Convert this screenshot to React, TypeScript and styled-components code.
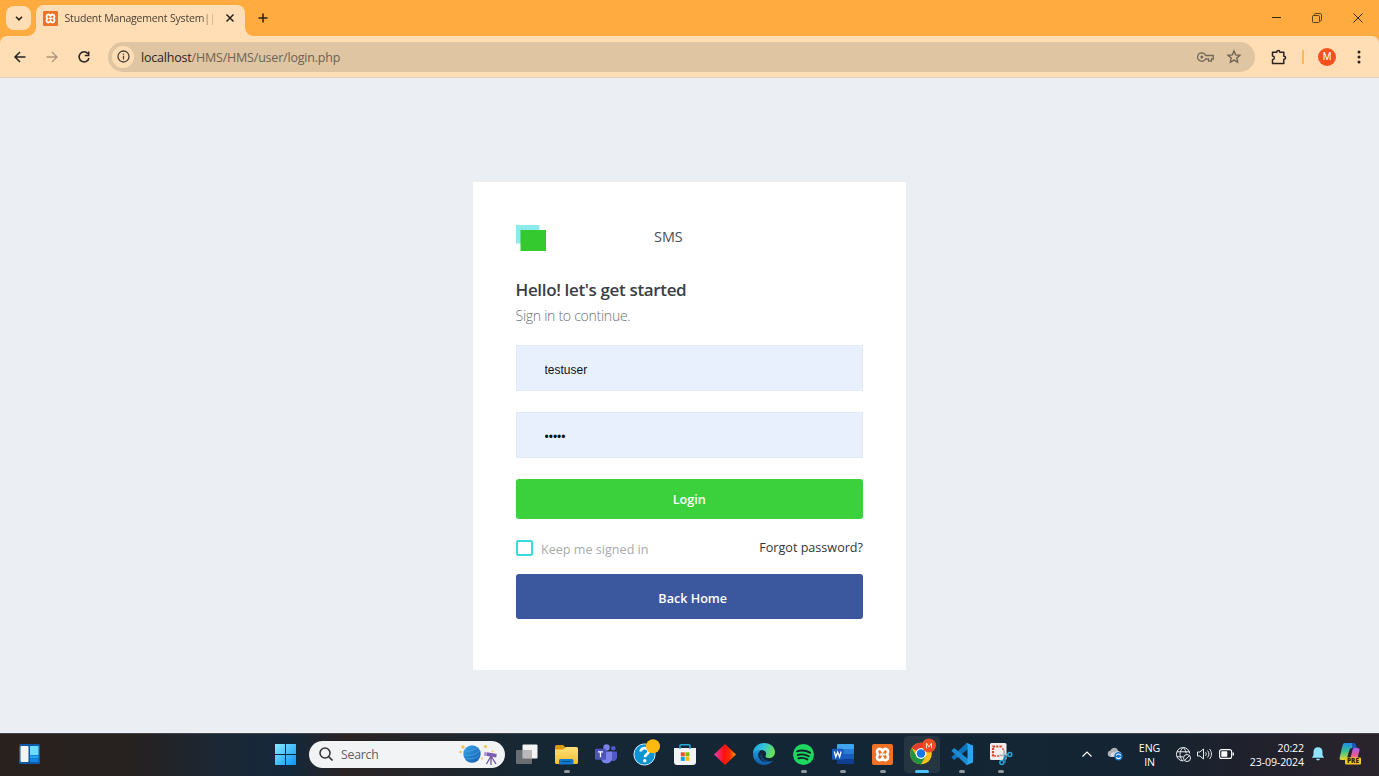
import React from "react";
import styled, { createGlobalStyle } from "styled-components";

const GlobalStyle = createGlobalStyle`
  * { box-sizing: border-box; }
  html, body { margin: 0; padding: 0; }
  body { width: 1379px; height: 776px; overflow: hidden; font-family: "Open Sans", "Noto Sans", sans-serif; }
  svg { display: block; flex: none; overflow: visible; }
`;

const Screen = styled.div`
  width: 1379px;
  height: 776px;
  display: flex;
  flex-direction: column;
  background: #ebeff4;
`;

/* ---------- browser ---------- */

const TabStrip = styled.header`
  height: 36px;
  display: flex;
  align-items: flex-start;
  background: #ffab40;
`;

const TabSearch = styled.button`
  width: 25px;
  height: 24px;
  margin: 6px 5px 0 6px;
  padding: 0;
  border: 0;
  border-radius: 8px;
  background: #ffdeb5;
  display: grid;
  place-items: center;
`;

const Tab = styled.div`
  position: relative;
  width: 209px;
  height: 31px;
  margin-top: 5px;
  padding: 0 9px 5px 7px;
  display: flex;
  align-items: center;
  border-radius: 8px 8px 0 0;
  background: #ffdeb5;
`;

const TabCurve = styled.svg<{ $side: "left" | "right" }>`
  position: absolute;
  bottom: 0;
  ${(p) => (p.$side === "left" ? "left: -9px;" : "right: -9px; transform: scaleX(-1);")}
`;

const TabTitle = styled.span`
  width: 154px;
  margin-left: 6.5px;
  white-space: nowrap;
  font: 400 10.5px/16px "Open Sans", sans-serif;
  letter-spacing: -0.18px;
  color: #4a4033;
  mask-image: linear-gradient(90deg, #000 88%, rgba(0, 0, 0, 0.1) 98%);
`;

const Spacer = styled.div`
  flex: 1;
`;

const WindowButtons = styled.div`
  display: flex;
  height: 36px;
  align-items: center;
  gap: 31px;
  padding-right: 16px;
`;

const Toolbar = styled.div`
  height: 42px;
  display: flex;
  align-items: center;
  padding: 0 12px;
  background: #ffdeb5;
  border-bottom: 1px solid #e3d2bd;
  border-radius: 7px 7px 0 0;
`;

const ToolbarBacking = styled.div`
  background: #ffab40;
`;

const NavIcon = styled.span<{ $w?: number }>`
  width: ${(p) => p.$w ?? 32}px;
  display: grid;
  place-items: center;
  flex: none;
`;

const AddressBar = styled.div`
  width: 1147px;
  height: 30px;
  display: flex;
  align-items: center;
  padding: 0 8px 0 4px;
  border-radius: 15px;
  background: #dfc5a2;
`;

const SiteInfo = styled.span`
  width: 22px;
  height: 22px;
  margin-right: 7px;
  border-radius: 50%;
  background: #ffdeb5;
  display: grid;
  place-items: center;
`;

const Url = styled.span`
  padding-top: 2px;
  font: 400 12.5px/18px "Open Sans", sans-serif;
  letter-spacing: -0.2px;
  color: #6d6252;
  b { font-weight: 400; color: #2b251d; }
`;

const ToolDivider = styled.span`
  width: 2px;
  height: 14px;
  margin: 0 14px 0 0;
  background: #ffb95c;
`;

const Avatar = styled.span`
  width: 18px;
  height: 18px;
  border-radius: 50%;
  background: #f4511e;
  color: #fff;
  font: 400 10px/18px Roboto, sans-serif;
  text-align: center;
`;

/* ---------- login page ---------- */

const Page = styled.main`
  height: 655px;
  padding: 104px 0.5px 0 0;
  background: #ebeff4;
`;

const Card = styled.form`
  width: 433.5px;
  height: 488px;
  margin: 0 auto;
  padding: 43px 43px 0 43px;
  background: #fff;
  display: flex;
  flex-direction: column;
`;

const Brand = styled.div`
  height: 27px;
  display: flex;
  align-items: flex-start;
`;

const BrandName = styled.span`
  margin-left: 108.5px;
  font-size: 14.4px;
  line-height: 24px;
  color: #4d4f52;
`;

const Heading = styled.h4`
  margin: 26px 0 0;
  font-size: 17px;
  font-weight: 600;
  line-height: 24px;
  letter-spacing: -0.35px;
  color: #3a4046;
`;

const Lead = styled.h6`
  margin: 4px 0 0;
  font-size: 14.1px;
  font-weight: 300;
  line-height: 20px;
  letter-spacing: -0.3px;
  color: #6f7275;
`;

const Field = styled.input<{ $gap: number }>`
  width: 100%;
  height: 46px;
  margin-top: ${(p) => p.$gap}px;
  padding: 3px 28px 0;
  border: 1px solid #e3eaf7;
  border-radius: 0;
  outline: 0;
  background: #e8f0fe;
  color: #111;
  font: 400 12px "Liberation Sans", Arial, sans-serif;
`;

const Action = styled.button<{ $color: string; $h: number; $gap: number; $indent?: number; $drop?: number }>`
  width: 100%;
  height: ${(p) => p.$h}px;
  flex: none;
  margin-top: ${(p) => p.$gap}px;
  padding: ${(p) => p.$drop ?? 0}px 0 0 ${(p) => p.$indent ?? 0}px;
  border: 0;
  border-radius: 3px;
  background: ${(p) => p.$color};
  color: #fff;
  font: 600 12.6px/18px "Open Sans", sans-serif;
`;

const Options = styled.div`
  height: 20px;
  margin-top: 19px;
  display: flex;
  align-items: center;
  font-size: 12.6px;
  line-height: 18px;
`;

const CheckBox = styled.span`
  width: 17px;
  height: 16px;
  margin-right: 8.5px;
  border: 2px solid #37dbe2;
  border-radius: 2px;
`;

const CheckLabel = styled.label`
  flex: 1;
  padding-top: 3px;
  color: #a7abae;
`;

const Forgot = styled.a`
  padding-bottom: 1px;
  color: #33363a;
`;

/* ---------- taskbar ---------- */

const Taskbar = styled.footer`
  height: 43px;
  display: flex;
  align-items: center;
  padding-bottom: 2px;
  border-top: 1px solid #45464c;
  background: linear-gradient(90deg, #28211e 0%, #27211f 9%, #1b2734 16%, #14283b 21%, #2a2324 25%, #222529 31%, #162734 38%, #132635 60%, #142432 82%, #1f212c 90%, #2a242c 100%);
`;

const Widgets = styled.span`
  margin: 0 235px 0 19px;
`;

const SearchBox = styled.div`
  width: 196px;
  height: 27px;
  margin: 0 2.5px 0 13px;
  padding: 0 6px 0 10px;
  display: flex;
  align-items: center;
  border-radius: 14px;
  background: #f2f3f5;
  color: #5c5f63;
  font: 400 12.3px/18px "Open Sans", sans-serif;
  letter-spacing: -0.25px;
`;

const SearchText = styled.span`
  flex: 1;
  margin-left: 8px;
  padding-top: 2px;
`;

const AppSlot = styled.span<{ $active?: boolean }>`
  position: relative;
  width: 36px;
  height: 37px;
  margin: 0 1.75px;
  flex: none;
  display: grid;
  place-items: center;
  border-radius: 4px;
  background: ${(p) => (p.$active ? "#253642" : "transparent")};
`;

const Running = styled.i<{ $active?: boolean }>`
  position: absolute;
  bottom: 0;
  left: 50%;
  width: ${(p) => (p.$active ? 14 : 6)}px;
  height: 3px;
  transform: translateX(-50%);
  border-radius: 2px;
  background: ${(p) => (p.$active ? "#4cc2ff" : "#8f989f")};
`;

const TrayItem = styled.span<{ $ml: number }>`
  margin-left: ${(p) => p.$ml}px;
  flex: none;
`;

const TrayText = styled.span<{ $w: number; $ml: number; $align: string }>`
  width: ${(p) => p.$w}px;
  margin-left: ${(p) => p.$ml}px;
  padding-top: 1px;
  flex: none;
  color: #fff;
  text-align: ${(p) => p.$align};
  white-space: nowrap;
  font: 400 10.6px/14px "Open Sans", sans-serif;
  letter-spacing: -0.1px;
`;

const RaisedIcon = styled.span`
  padding-bottom: 5px;
`;

/* ---------- icons ---------- */

const Xampp = ({ size }: { size: number }) => (
  <svg width={size} height={size} viewBox="0 0 22 22">
    <rect width="22" height="22" rx="2" fill="#ee7125" />
    <path d="M7.200 5.200c2.200-.7 3.200 1 3.800 2.200.6-1.200 1.600-2.900 3.800-2.200 2.700.9 2.400 4.100.8 5.800 1.600 1.700 1.900 4.900-.8 5.800-2.200.7-3.200-1-3.800-2.200-.6 1.200-1.600 2.900-3.800 2.200C4.500 15.900 4.800 12.700 6.400 11 4.800 9.300 4.500 6.100 7.200 5.200z" fill="none" stroke="#fff" strokeWidth="2.700" />
    <path d="M8.500 11h5" stroke="#fff" strokeWidth="2.300" />
  </svg>
);

const WidgetsIcon = () => (
  <svg width="21" height="20" viewBox="0 0 21 20">
    <rect width="21" height="20" rx="1.500" fill="#0c5cab" />
    <rect x="1.500" y="2" width="8" height="16" rx="1" fill="#f4f4f4" />
    <rect x="11" y="2" width="8.500" height="9" fill="#6edcff" />
    <rect x="11" y="11.500" width="8.500" height="3" fill="#22a5f0" />
    <rect x="11" y="15" width="8.500" height="3" fill="#0f86e4" />
  </svg>
);

const WindowsIcon = () => (
  <svg width="21" height="21" viewBox="0 0 21 21">
    <defs>
      <linearGradient id="win" x1="0" y1="0" x2="1" y2="1">
        <stop offset="0" stopColor="#83ecfd" />
        <stop offset="1" stopColor="#0a93f8" />
      </linearGradient>
    </defs>
    <path d="M0 0h10v10H0zM11 0h10v10H11zM0 11h10v10H0zM11 11h10v10H11z" fill="url(#win)" />
  </svg>
);

const SearchArt = () => (
  <svg width="42" height="22" viewBox="0 0 42 22">
    <defs>
      <linearGradient id="planet" x1="0" y1="0" x2="1" y2="1">
        <stop offset="0" stopColor="#3aa9ee" />
        <stop offset="1" stopColor="#1257ae" />
      </linearGradient>
    </defs>
    <circle cx="15" cy="11" r="8.700" fill="url(#planet)" />
    <path d="M9 8c4 1 7-1 11-3M8 12c5 1.500 10 0 14.500-4M10 15.500c4 1 9 0 12.500-3.500" fill="none" stroke="#3f9fe0" strokeWidth="1" />
    <g fill="#f3c04b">
      <circle cx="6" cy="4" r="1.700" /><circle cx="3.500" cy="9" r="1.200" /><circle cx="28.500" cy="3.500" r="1.500" /><circle cx="25" cy="15.500" r="1" /><circle cx="35.500" cy="8.500" r="1" />
    </g>
    <path d="M29.500 11l10 1.700" stroke="#7b5cb5" strokeWidth="3.500" />
    <path d="M28.500 8.800l-.6 4" stroke="#a58ad6" strokeWidth="1.800" />
    <path d="M34 13l-4.500 8M34 13v9M34 13l5 8" stroke="#6f5a9c" strokeWidth="1.300" />
  </svg>
);

const TaskViewIcon = () => (
  <svg width="22" height="20" viewBox="0 0 22 20">
    <rect x="6.500" y="0.500" width="15" height="14" rx="1" fill="#f3f3f3" />
    <rect x="0" y="6" width="16" height="14" rx="1" fill="#77797a" opacity=".88" />
    <rect x="6.500" y="6" width="9.500" height="8.500" fill="#b9b9b9" />
  </svg>
);

const FolderIcon = () => (
  <svg width="23" height="21" viewBox="0 0 23 21">
    <defs>
      <linearGradient id="folder" x1="0" y1="0" x2="0" y2="1">
        <stop offset="0" stopColor="#ffe07a" />
        <stop offset="1" stopColor="#f6bd2f" />
      </linearGradient>
    </defs>
    <path d="M0 2.500Q0 1 1.500 1H8l3 3-3 5H0z" fill="#d99a10" />
    <path d="M0 5.500h8l3-2.500h10.500q1.500 0 1.500 1.500v14q0 1.500-1.500 1.500h-20Q0 20 0 18.500z" fill="url(#folder)" />
    <path d="M4 20.500V16.500Q4 15 5.500 15H17q1.500 0 1.500 1.500v4z" fill="#1178cf" />
    <path d="M7 17.500h8.500" stroke="#0a4a86" strokeWidth="1" />
  </svg>
);

const TeamsIcon = () => (
  <svg width="22" height="20" viewBox="0 0 22 20">
    <circle cx="11.500" cy="3.500" r="3.200" fill="#7b83eb" />
    <circle cx="18.300" cy="4.200" r="2.300" fill="#5059c9" />
    <path d="M15 7.500h7v6a4 4 0 0 1-6 3z" fill="#5059c9" />
    <path d="M6 7.500h11v6.500a5.500 5.500 0 0 1-11 0z" fill="#7b83eb" />
    <rect x="0" y="4.700" width="11" height="11" rx="1" fill="#4b53bc" />
    <path d="M3 7.800h5M5.500 7.800v5.500" stroke="#fff" strokeWidth="1.300" />
  </svg>
);

const HelpIcon = () => (
  <svg width="26" height="26" viewBox="0 0 26 26">
    <circle cx="11.500" cy="15.500" r="10.600" fill="#0c93d4" stroke="#d7edf8" strokeWidth="1" />
    <path d="M7.700 12.500c0-4.500 8-4.500 8 0 0 2.600-3.800 2.700-3.800 5.700" fill="none" stroke="#fff" strokeWidth="2.700" />
    <circle cx="11.800" cy="21.800" r="1.700" fill="#fff" />
    <circle cx="20" cy="7.300" r="7" fill="#ffb90f" />
  </svg>
);

const StoreIcon = () => (
  <svg width="22" height="21" viewBox="0 0 22 21">
    <path d="M0 4h22v14q0 3-3 3H3q-3 0-3-3z" fill="#f3f4f5" />
    <path d="M6 5V1.500Q6 .7 7 .7h8q1 0 1 .8V5" fill="none" stroke="#2aa9dd" strokeWidth="1.500" />
    <path d="M6.800 8.300h4v4h-4z" fill="#f25022" />
    <path d="M11.400 8.300h4v4h-4z" fill="#7fba00" />
    <path d="M6.800 12.900h4v4h-4z" fill="#00a4ef" />
    <path d="M11.400 12.900h4v4h-4z" fill="#ffb900" />
  </svg>
);

const DiamondIcon = () => (
  <svg width="22" height="21" viewBox="0 0 22 21">
    <defs>
      <linearGradient id="dia" x1="0" x2="1">
        <stop offset="0" stopColor="#e03fb8" /><stop offset=".45" stopColor="#ff1010" /><stop offset=".7" stopColor="#ff2a00" /><stop offset="1" stopColor="#ff9a00" />
      </linearGradient>
    </defs>
    <path d="M11 0l11 10.500L11 21 0 10.500z" fill="url(#dia)" />
  </svg>
);

const EdgeIcon = () => (
  <svg width="22" height="22" viewBox="0 0 22 22">
    <defs>
      <linearGradient id="edge1" x1="0" y1="0" x2="1" y2="0.3">
        <stop offset="0" stopColor="#1d9fe0" /><stop offset=".5" stopColor="#33c3df" /><stop offset="1" stopColor="#66e05a" />
      </linearGradient>
      <linearGradient id="edge2" x1="0" y1="0" x2="0" y2="1">
        <stop offset="0" stopColor="#1c9de0" /><stop offset="1" stopColor="#0d58a8" />
      </linearGradient>
    </defs>
    <path d="M0 11C0 4 5 0 11 0c7 0 11 4.500 11 9 0 4-3 6-6 6-2.500 0-4-.8-3.400-2 1.200-2.300.4-6-4.100-6C4 7 1 9.500 0 11z" fill="url(#edge1)" />
    <path d="M0 11c1-3 4.500-4.500 8-3.800C5 9 4.500 12 6 15c2 3.800 7 5.500 14 2.500C18 20.500 14.500 22 11 22 5 22 0 17 0 11z" fill="url(#edge2)" />
    <path d="M8.500 9.500C5.800 13 8 19 15.500 19c2 0 3.500-.5 4.800-1.500-6 2-13-1.500-11.800-8z" fill="#114a8b" />
  </svg>
);

const SpotifyIcon = () => (
  <svg width="21" height="21" viewBox="0 0 21 21">
    <circle cx="10.500" cy="10.500" r="10.500" fill="#1ed760" />
    <path d="M4 7.300c4.500-1.300 9-.8 13 1.400M4.700 11c4-1.100 7.600-.7 11 1.300M5.300 14.300c3.300-.8 6.300-.5 9 1.100" fill="none" stroke="#10222a" strokeWidth="1.900" strokeLinecap="round" />
  </svg>
);

const WordIcon = () => (
  <svg width="22" height="20" viewBox="0 0 22 20">
    <path d="M5 1q0-1 1-1h15q1 0 1 1v4H5z" fill="#41a5ee" />
    <path d="M5 5h17v5H5z" fill="#2b7cd3" />
    <path d="M5 10h17v5H5z" fill="#185abd" />
    <path d="M5 15h17v4q0 1-1 1H6q-1 0-1-1z" fill="#103f91" />
    <rect x="0" y="4.800" width="11.500" height="11" rx="1" fill="#185abd" />
    <path d="M2.300 7.500l1.500 5.500 1.900-5 1.900 5 1.500-5.500" fill="none" stroke="#fff" strokeWidth="1.300" />
  </svg>
);

const ChromeIcon = () => (
  <svg width="26" height="27" viewBox="0 0 26 27">
    <circle cx="12" cy="15.500" r="10.800" fill="#fbc116" />
    <path d="M12 15.500L2.650 10.100A10.800 10.800 0 0 1 21.350 10.100H12z" fill="#e33b2e" />
    <path d="M2.650 10.100A10.800 10.800 0 0 0 12 26.300l4.700-8.100L12 15.500 7.500 18z" fill="#229342" />
    <circle cx="12" cy="15.500" r="5.400" fill="#fff" />
    <circle cx="12" cy="15.500" r="4.200" fill="#1a73e8" />
    <circle cx="20" cy="7.500" r="7" fill="#f04e23" />
    <path d="M17.500 10.200V5l2.500 4 2.500-4v5.200" fill="none" stroke="#ffd9cb" strokeWidth="1" />
  </svg>
);

const CodeIcon = () => (
  <svg width="22" height="22" viewBox="0 0 22 22">
    <path d="M.3 14.200L15 .6l2.200.6v4.900L3.200 17z" fill="#0f73b9" />
    <path d="M.3 7.800L15 21.400l2.200-.6v-4.900L3.200 5z" fill="#1b8ad3" />
    <path d="M16 0l6 2.500v17L16 22l-1-.7L16.500 20V2L15 .7z" fill="#2aa5ee" />
  </svg>
);

const SnipIcon = () => (
  <svg width="24" height="23" viewBox="0 0 24 23">
    <rect x="1" y="0" width="16.500" height="17" rx="1.500" fill="#f0efee" />
    <path d="M4 13.500V3.500h10" fill="none" stroke="#d8492c" strokeWidth="2.200" strokeDasharray="2.200 1.100" />
    <path d="M5 13h6M14 5v3" fill="none" stroke="#e07a5f" strokeWidth="1.800" strokeDasharray="2 1" />
    <path d="M10.500 12.500l8-.7M15 7l.7 10" stroke="#aab4b9" strokeWidth="1.800" />
    <circle cx="20.800" cy="11.500" r="2" fill="none" stroke="#2aa6dc" strokeWidth="1.500" />
    <circle cx="12.800" cy="19.500" r="2" fill="none" stroke="#2aa6dc" strokeWidth="1.500" />
    <path d="M16 12v8M15 19h1.500M19 12.800l-3.500 1.700-1.500 3.500" fill="none" stroke="#2480b4" strokeWidth="1.500" />
  </svg>
);

const CopilotIcon = () => (
  <svg width="23" height="22" viewBox="0 0 23 22">
    <defs>
      <linearGradient id="cp1" x1="0" y1="0" x2="0" y2="1">
        <stop offset="0" stopColor="#1b8fe8" /><stop offset=".5" stopColor="#3ac28d" /><stop offset="1" stopColor="#e9d332" />
      </linearGradient>
      <linearGradient id="cp2" x1="0" y1="0" x2="0" y2="1">
        <stop offset="0" stopColor="#a55bf0" /><stop offset=".6" stopColor="#e9599b" /><stop offset="1" stopColor="#f9984e" />
      </linearGradient>
    </defs>
    <path d="M6 0h8q2 0 2.600 2l.9 3H13q-2 0-2.600 2L8 15q-.6 2-2.600 2H2.500Q0 17 .7 14.500L3.600 2Q4 0 6 0z" fill="url(#cp1)" />
    <path d="M13 0h1q2 0 2.600 2l.9 3H13z" fill="#1d56c4" />
    <path d="M15 5h3.500q2.500 0 2 2.600L18.500 15q-.6 2-2.600 2H9.500q1.600-.4 2-2l2-8q.4-2 1.500-2z" fill="url(#cp2)" />
    <rect x="6" y="14.500" width="16" height="7" rx="1" fill="#ffc21a" />
    <text x="14" y="20.400" textAnchor="middle" fontFamily="Open Sans, sans-serif" fontWeight="800" fontSize="6.400" fill="#30240a">PRE</text>
  </svg>
);

const apps: { name: string; icon: React.ReactNode; running?: boolean; active?: boolean }[] = [
  { name: "task-view", icon: <TaskViewIcon /> },
  { name: "files", icon: <FolderIcon />, running: true },
  { name: "teams", icon: <TeamsIcon /> },
  { name: "help", icon: <RaisedIcon><HelpIcon /></RaisedIcon> },
  { name: "store", icon: <StoreIcon /> },
  { name: "diamond", icon: <DiamondIcon /> },
  { name: "edge", icon: <EdgeIcon /> },
  { name: "spotify", icon: <SpotifyIcon />, running: true },
  { name: "word", icon: <WordIcon />, running: true },
  { name: "xampp", icon: <Xampp size={21} />, running: true },
  { name: "chrome", icon: <RaisedIcon><ChromeIcon /></RaisedIcon>, running: true, active: true },
  { name: "code", icon: <CodeIcon />, running: true },
  { name: "snip", icon: <SnipIcon />, running: true },
];

export default function App() {
  return (
    <Screen>
      <GlobalStyle />
      <TabStrip>
        <TabSearch type="button">
          <svg width="8" height="5" viewBox="0 0 8 5"><path d="M1 .8l3 3 3-3" fill="none" stroke="#2a2118" strokeWidth="1.600" /></svg>
        </TabSearch>
        <Tab>
          <TabCurve $side="left" width="9" height="9" viewBox="0 0 9 9"><path d="M9 0v9H0c5 0 9-4 9-9z" fill="#ffdeb5" /></TabCurve>
          <TabCurve $side="right" width="9" height="9" viewBox="0 0 9 9"><path d="M9 0v9H0c5 0 9-4 9-9z" fill="#ffdeb5" /></TabCurve>
          <Xampp size={15} />
          <TabTitle>Student Management System|| S</TabTitle>
          <Spacer />
          <svg width="12" height="12" viewBox="0 0 12 12"><path d="M2.500 2.500l7 7M9.500 2.500l-7 7" stroke="#2a2118" strokeWidth="1.500" /></svg>
        </Tab>
        <NavIcon $w={35}>
          <svg width="10" height="36" viewBox="0 0 10 36"><path d="M5 13.500v9M.5 18h9" stroke="#2a2118" strokeWidth="1.500" /></svg>
        </NavIcon>
        <Spacer />
        <WindowButtons>
          <svg width="9" height="10" viewBox="0 0 9 10"><path d="M0 4.500h9" stroke="#3b2a12" strokeWidth="1" /></svg>
          <svg width="10" height="10" viewBox="0 0 10 10"><path d="M2.500 2.500V1.700Q2.500.5 3.700.5H8.300Q9.500.5 9.500 1.700V6.800Q9.500 8 8.300 8H7.500" fill="none" stroke="#4b3617" strokeWidth=".9" /><rect x=".5" y="2.500" width="7" height="7" rx="1" fill="none" stroke="#4b3617" strokeWidth=".9" /></svg>
          <svg width="10" height="10" viewBox="0 0 10 10"><path d="M.5.5l9 9M9.500.5l-9 9" stroke="#3b2a12" strokeWidth="1" /></svg>
        </WindowButtons>
      </TabStrip>
      <ToolbarBacking>
        <Toolbar>
          <NavIcon $w={16}><svg width="12" height="12" viewBox="0 0 12 12"><path d="M11.500 6H1.500M6 1L1 6l5 5" fill="none" stroke="#2a2521" strokeWidth="1.500" /></svg></NavIcon>
          <NavIcon $w={48}><svg width="12" height="12" viewBox="0 0 12 12"><path d="M.5 6h10M6 1l5 5-5 5" fill="none" stroke="#ad967a" strokeWidth="1.400" /></svg></NavIcon>
          <NavIcon $w={16}><svg width="12" height="12" viewBox="0 0 12 12"><path d="M10 2.700A5 5 0 1 0 11 7M10.700.5v4H6.800" fill="none" stroke="#2a2521" strokeWidth="1.500" /></svg></NavIcon>
          <NavIcon $w={16} />
          <AddressBar>
            <SiteInfo><svg width="13" height="13" viewBox="0 0 13 13"><circle cx="6.500" cy="6.500" r="5.500" fill="none" stroke="#4b4136" strokeWidth="1.300" /><path d="M6.500 5.800v3.700M6.500 3.400v1.400" stroke="#4b4136" strokeWidth="1.300" /></svg></SiteInfo>
            <Url><b>localhost</b>/HMS/HMS/user/login.php</Url>
            <Spacer />
            <NavIcon $w={30}>
              <svg width="17" height="10" viewBox="0 0 17 10"><path d="M4.800.8a4.200 4.200 0 1 0 3.700 6.200h3v2h3V7h1.800V3.500H8.600A4.200 4.200 0 0 0 4.800.8z" fill="none" stroke="#75695a" strokeWidth="1.300" /><circle cx="4.800" cy="5" r="1.500" fill="#75695a" /></svg>
            </NavIcon>
            <NavIcon $w={27}>
              <svg width="14" height="13" viewBox="0 0 14 13"><path d="M7 1l1.700 3.900 4.300.4-3.200 2.800.9 4.200L7 10.100l-3.700 2.200.9-4.200L1 5.300l4.300-.4z" fill="none" stroke="#6a5f51" strokeWidth="1.300" /></svg>
            </NavIcon>
          </AddressBar>
          <NavIcon $w={47}>
            <svg width="16" height="16" viewBox="0 0 16 16"><path d="M1.500 3.200h4.300c0-2.300 3-2.300 3 0h4v4c2.400 0 2.400 3 0 3v4.300H1.500v-3.800c2.500-.3 2.500-3.400 0-3.700z" fill="none" stroke="#2a2521" strokeWidth="1.500" strokeLinejoin="round" /></svg>
          </NavIcon>
          <ToolDivider />
          <Avatar>M</Avatar>
          <Spacer />
          <svg width="16" height="14" viewBox="0 0 16 14"><g fill="#2a2521"><circle cx="8" cy="2" r="1.500" /><circle cx="8" cy="7" r="1.500" /><circle cx="8" cy="12" r="1.500" /></g></svg>
        </Toolbar>
      </ToolbarBacking>

      <Page>
        <Card onSubmit={(e) => e.preventDefault()}>
          <Brand>
            <svg width="30" height="26" viewBox="0 0 30 26"><rect width="23.500" height="18.500" fill="#8ce9ec" /><rect x="4.500" y="5" width="25.500" height="21" fill="#34c92e" /></svg>
            <BrandName>SMS</BrandName>
          </Brand>
          <Heading>Hello! let's get started</Heading>
          <Lead>Sign in to continue.</Lead>
          <Field $gap={19} type="text" defaultValue="testuser" />
          <Field $gap={21} type="password" defaultValue="admin" />
          <Action type="submit" $color="#3bd13c" $h={40} $gap={21} $drop={1}>Login</Action>
          <Options>
            <CheckBox />
            <CheckLabel>Keep me signed in</CheckLabel>
            <Forgot>Forgot password?</Forgot>
          </Options>
          <Action type="button" $color="#3b579d" $h={45} $gap={16} $indent={7} $drop={4}>Back Home</Action>
        </Card>
      </Page>

      <Taskbar>
        <Widgets><WidgetsIcon /></Widgets>
        <WindowsIcon />
        <SearchBox>
          <svg width="14" height="14" viewBox="0 0 14 14"><circle cx="6" cy="6" r="5" fill="none" stroke="#303236" strokeWidth="1.500" /><path d="M9.500 9.500l4 4" stroke="#303236" strokeWidth="1.700" /></svg>
          <SearchText>Search</SearchText>
          <SearchArt />
        </SearchBox>
        {apps.map((a) => (
          <AppSlot key={a.name} $active={a.active}>
            {a.icon}
            {a.running && <Running $active={a.active} />}
          </AppSlot>
        ))}
        <TrayItem $ml={60.5}>
          <svg width="10" height="6" viewBox="0 0 10 6"><path d="M.5 5.500l4.500-4.500 4.500 4.500" fill="none" stroke="#fff" strokeWidth="1.200" /></svg>
        </TrayItem>
        <TrayItem $ml={15}>
          <svg width="16" height="14" viewBox="0 0 16 14"><path d="M3.500 10a3.300 3.300 0 0 1 0-6.500C5-.5 10.500 0 11 4c5 .5 4.500 6 1 6z" fill="#aeb2b5" /><path d="M5 10c-3-2 0-6 3-4.500C11 3 14 5 13 8z" fill="#d9dbdc" /><circle cx="11.500" cy="9.300" r="4.200" fill="#1a74c4" /><path d="M9.300 8.500a2.400 2.400 0 0 1 4.400 0M13.700 10.200a2.400 2.400 0 0 1-4.400 0" fill="none" stroke="#fff" strokeWidth="1.100" /></svg>
        </TrayItem>
        <TrayText $w={30} $ml={12} $align="center">ENG<br />IN</TrayText>
        <TrayItem $ml={11}>
          <svg width="15" height="15" viewBox="0 0 15 15"><g fill="none" stroke="#e8ebed" strokeWidth="1"><path d="M13.800 6.500A6.700 6.700 0 1 0 7.500 13.900M7 .6C3 4.500 3 10.500 7 14M7.300.6c1.800 1.800 2.700 3.700 2.900 5.700M1 4.800h12.500M.8 9.800H7" /><circle cx="11" cy="11" r="3.500" /><path d="M8.600 13.400l4.800-4.800" /></g></svg>
        </TrayItem>
        <TrayItem $ml={6.5}>
          <svg width="15" height="12" viewBox="0 0 15 12"><g fill="none" stroke="#e8ebed" strokeWidth="1"><path d="M.5 4v4h2.300L6.500 11V1L2.800 4z" /><path d="M8.500 4.200c1 1 1 2.600 0 3.600M10.500 2.600c1.900 1.900 1.900 4.900 0 6.800M12.500 1c2.600 2.700 2.600 7.300 0 10" /></g></svg>
        </TrayItem>
        <TrayItem $ml={6.5}>
          <svg width="15" height="10" viewBox="0 0 15 10"><rect x=".6" y=".6" width="12" height="8.800" rx="2" fill="none" stroke="#fff" strokeWidth="1.100" /><rect x="2.300" y="2.300" width="6" height="5.400" rx=".6" fill="#fff" /><path d="M14.200 3.500v3" stroke="#fff" strokeWidth="1.400" /></svg>
        </TrayItem>
        <TrayText $w={62} $ml={8.5} $align="right">20:22<br />23-09-2024</TrayText>
        <TrayItem $ml={7.500}>
          <svg width="12" height="14" viewBox="0 0 12 14"><path d="M6 .3c3 0 4.500 2 4.500 4.700v3L12 10.800H0L1.500 8V5C1.500 2.300 3 .3 6 .3zM4 11.800h4c-.4 2.300-3.600 2.300-4 0z" fill="#8fe3ff" /></svg>
        </TrayItem>
        <TrayItem $ml={15}><CopilotIcon /></TrayItem>
      </Taskbar>
    </Screen>
  );
}
